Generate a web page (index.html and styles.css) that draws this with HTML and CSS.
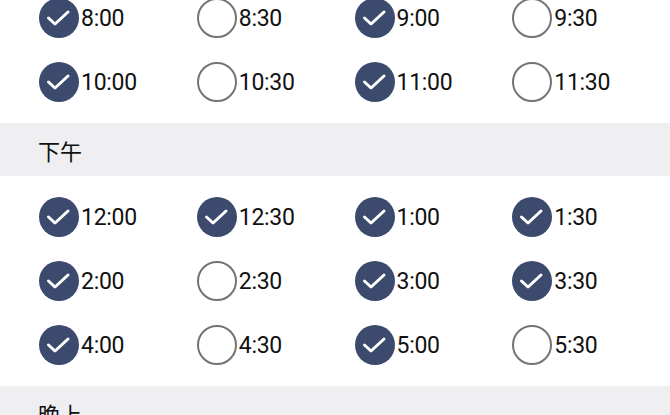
FILE: index.html
```html
<!DOCTYPE html>
<html lang="zh">
<head>
    <meta charset="UTF-8">
    <title>时间选择</title>
    <link rel="stylesheet" href="styles.css">
</head>
<body>
    <div class="page">
        <section class="slots slots-top">
            <div class="slot checked"><span class="dot"></span>8:00</div>
            <div class="slot"><span class="dot"></span>8:30</div>
            <div class="slot checked"><span class="dot"></span>9:00</div>
            <div class="slot"><span class="dot"></span>9:30</div>
            <div class="slot checked"><span class="dot"></span>10:00</div>
            <div class="slot"><span class="dot"></span>10:30</div>
            <div class="slot checked"><span class="dot"></span>11:00</div>
            <div class="slot"><span class="dot"></span>11:30</div>
        </section>

        <h2 class="period">下午</h2>

        <section class="slots">
            <div class="slot checked"><span class="dot"></span>12:00</div>
            <div class="slot checked"><span class="dot"></span>12:30</div>
            <div class="slot checked"><span class="dot"></span>1:00</div>
            <div class="slot checked"><span class="dot"></span>1:30</div>
            <div class="slot checked"><span class="dot"></span>2:00</div>
            <div class="slot"><span class="dot"></span>2:30</div>
            <div class="slot checked"><span class="dot"></span>3:00</div>
            <div class="slot checked"><span class="dot"></span>3:30</div>
            <div class="slot checked"><span class="dot"></span>4:00</div>
            <div class="slot"><span class="dot"></span>4:30</div>
            <div class="slot checked"><span class="dot"></span>5:00</div>
            <div class="slot"><span class="dot"></span>5:30</div>
        </section>

        <h2 class="period">晚上</h2>
    </div>
</body>
</html>
```

FILE: styles.css
```css
* {
    margin: 0;
    padding: 0;
    box-sizing: border-box;
}

body {
    background: #ffffff;
    color: #111111;
    font-family: Roboto, "Noto Sans CJK SC", sans-serif;
    overflow: hidden;
}

/* the screenshot is scrolled: first row is cut at the top */
.page {
    margin-top: -14px;
}

.slots {
    display: grid;
    grid-template-columns: repeat(4, 1fr);
    grid-auto-rows: 64px;
    padding: 9px 0 9px 39px;
}

.slots-top {
    padding-top: 0;
}

.slot {
    display: flex;
    align-items: center;
    font-size: 23px;
    letter-spacing: -0.3px;
}

.dot {
    width: 40px;
    height: 40px;
    margin-right: 2px;
    border-radius: 50%;
    border: 2px solid #747474;
    background: #ffffff;
    flex-shrink: 0;
}

.checked .dot {
    border: none;
    background-color: #3b4a6d;
    background-image: url("data:image/svg+xml,%3Csvg xmlns='http://www.w3.org/2000/svg' width='40' height='40'%3E%3Cpath d='M9.5 20l6.5 6 13-12' fill='none' stroke='%23fff' stroke-width='3' stroke-linecap='round' stroke-linejoin='round'/%3E%3C/svg%3E");
}

.period {
    height: 53px;
    display: flex;
    align-items: center;
    padding-left: 38px;
    background: #efeff1;
    font-family: "Noto Sans CJK SC", sans-serif;
    font-size: 22px;
    font-weight: 400;
    color: #111111;
}
```
